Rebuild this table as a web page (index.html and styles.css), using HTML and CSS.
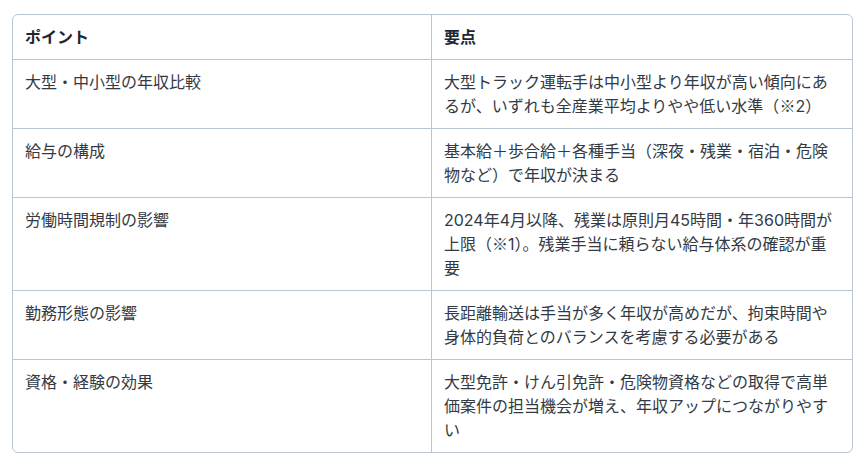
FILE: index.html
```html
<!DOCTYPE html>
<html lang="ja">
<head>
<meta charset="utf-8">
<link rel="stylesheet" href="styles.css">
</head>
<body>
<div class="wrap">
<table class="points">
<thead>
<tr><th>ポイント</th><th>要点</th></tr>
</thead>
<tbody>
<tr><td>大型・中小型の年収比較</td><td>大型トラック運転手は中小型より年収が高い傾向にあるが、いずれも全産業平均よりやや低い水準（<span class="cjk">※</span>2）</td></tr>
<tr><td>給与の構成</td><td>基本給＋歩合給＋各種手当（深夜・残業・宿泊・危険物など）で年収が決まる</td></tr>
<tr><td>労働時間規制の影響</td><td>2024年4月以降、残業は原則月45時間・年360時間が上限（<span class="cjk">※</span>1）。残業手当に頼らない給与体系の確認が重要</td></tr>
<tr><td>勤務形態の影響</td><td>長距離輸送は手当が多く年収が高めだが、拘束時間や身体的負荷とのバランスを考慮する必要がある</td></tr>
<tr><td>資格・経験の効果</td><td>大型免許・けん引免許・危険物資格などの取得で高単価案件の担当機会が増え、年収アップにつながりやすい</td></tr>
</tbody>
</table>
</div>
</body>
</html>
```
FILE: styles.css
```css
html, body {
  margin: 0;
  padding: 0;
  background: #ffffff;
}
body {
  font-family: Inter, "Noto Sans CJK JP", sans-serif;
  font-size: 16px;
  line-height: 24px;
  color: #333a44;
}
.cjk {
  font-family: "Noto Sans CJK JP", sans-serif;
  line-height: 1;
}
.wrap {
  padding: 14px 14px 0 12px;
}
.points {
  width: 841px;
  border-collapse: separate;
  border-spacing: 0;
  border: 1px solid #b9c6d2;
  border-radius: 6px;
  table-layout: fixed;
}
.points th, .points td {
  padding: 10px 12px;
  text-align: left;
  vertical-align: top;
  border-bottom: 1px solid #b9c6d2;
}
.points th:first-child, .points td:first-child {
  width: 394px;
  border-right: 1px solid #b9c6d2;
}
.points tbody tr:last-child td {
  border-bottom: none;
}
.points th {
  font-weight: 700;
  color: #1f2630;
}
```
